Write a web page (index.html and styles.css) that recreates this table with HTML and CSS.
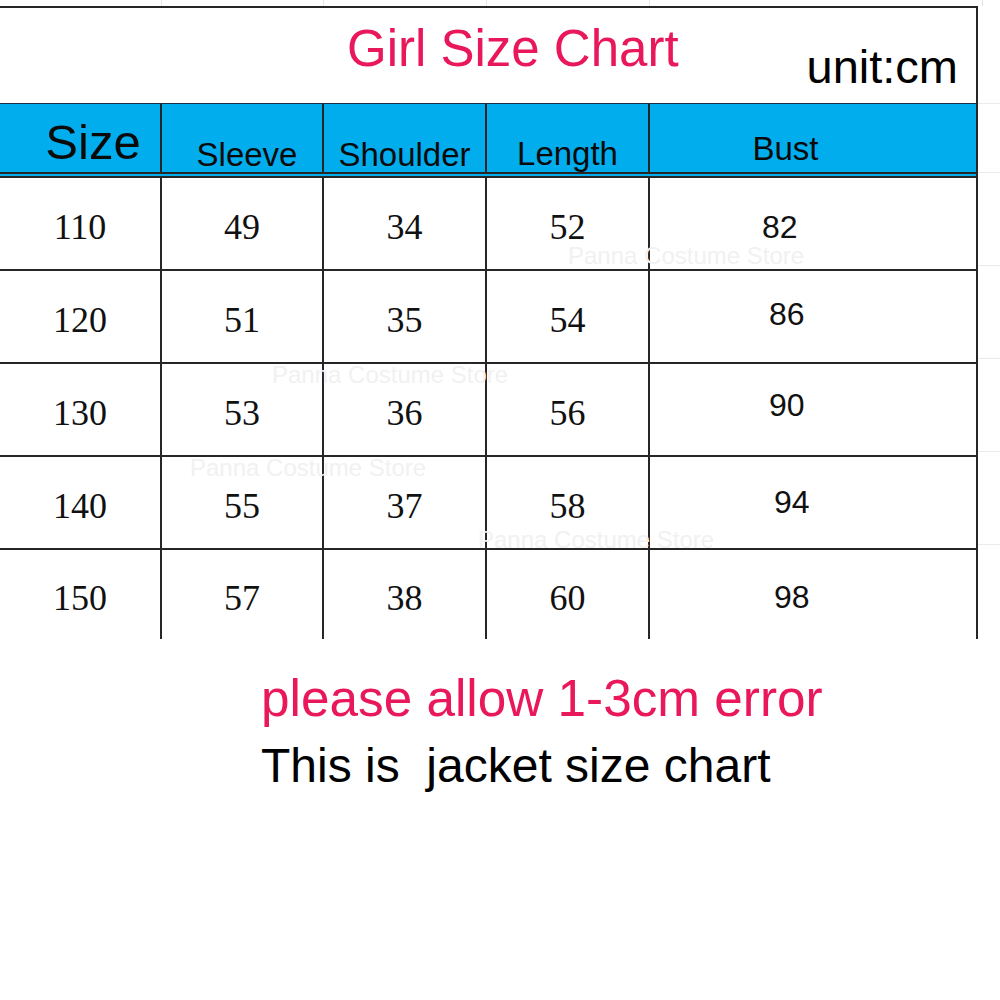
FILE: index.html
```html
<!DOCTYPE html>
<html lang="en">
<head>
<meta charset="utf-8">
<title>Girl Size Chart</title>
<link rel="stylesheet" href="styles.css">
</head>
<body>
<div class="page">
  <div class="topstrip">
    <span class="ts c1"></span><span class="ts c2"></span><span class="ts c3"></span><span class="ts c4"></span><span class="ts c5"></span>
  </div>
  <div class="sheet">
    <div class="chart">
      <div class="titlebar">
        <h1 class="title">Girl Size Chart</h1>
        <span class="unit">unit:cm</span>
      </div>
      <div class="row head">
        <div class="cell h-size">Size</div>
        <div class="cell h-sleeve">Sleeve</div>
        <div class="cell h-shoulder">Shoulder</div>
        <div class="cell h-length">Length</div>
        <div class="cell h-bust">Bust</div>
      </div>
      <div class="row data">
        <div class="cell num">110</div><div class="cell num">49</div><div class="cell num">34</div><div class="cell num">52</div><div class="cell bust b1">82</div>
      </div>
      <div class="row data">
        <div class="cell num">120</div><div class="cell num">51</div><div class="cell num">35</div><div class="cell num">54</div><div class="cell bust b2">86</div>
      </div>
      <div class="row data">
        <div class="cell num">130</div><div class="cell num">53</div><div class="cell num">36</div><div class="cell num">56</div><div class="cell bust b3">90</div>
      </div>
      <div class="row data">
        <div class="cell num">140</div><div class="cell num">55</div><div class="cell num">37</div><div class="cell num">58</div><div class="cell bust b4">94</div>
      </div>
      <div class="row data last">
        <div class="cell num">150</div><div class="cell num">57</div><div class="cell num">38</div><div class="cell num">60</div><div class="cell bust b5">98</div>
      </div>
    </div>
    <div class="gutter">
      <div class="g g-title"></div>
      <div class="g g-head"></div>
      <div class="g g-row"></div>
      <div class="g g-row"></div>
      <div class="g g-row"></div>
      <div class="g g-row"></div>
    </div>
    <div class="mark m1">Panna Costume Store</div>
    <div class="mark m2">Panna Costume Store</div>
    <div class="mark m3">Panna Costume Store</div>
    <div class="mark m4">Panna Costume Store</div>
  </div>
  <div class="notes">
    <p class="warn">please allow 1-3cm error</p>
    <p class="info">This is&nbsp; jacket size chart</p>
  </div>
</div>
</body>
</html>
```

FILE: styles.css
```css
html, body {
  margin: 0;
  padding: 0;
  background: #ffffff;
}

.page {
  width: 1000px;
  height: 1000px;
  overflow: hidden;
  font-family: "Liberation Sans", Arial, sans-serif;
  color: #000;
}

/* faint spreadsheet gridlines above the chart */
.topstrip {
  height: 6px;
  display: grid;
  grid-template-columns: 162px 162px 163px 163px 333px;
}
.ts {
  border-right: 1px solid #e6e6e6;
}

.sheet {
  position: relative;
  display: flex;
}

.chart {
  width: 978px;
  flex: none;
  box-sizing: border-box;
  border-top: 2px solid #262626;
  border-right: 2px solid #262626;
  display: flex;
  flex-direction: column;
}

.titlebar {
  height: 95px;
  display: flex;
  align-items: flex-start;
}
.title {
  margin: 0 0 0 347px;
  padding-top: 15px;
  font-size: 51px;
  line-height: 1;
  font-weight: normal;
  color: #e8185b;
}
.unit {
  margin-left: auto;
  margin-right: 18px;
  padding-top: 35px;
  font-size: 47px;
  line-height: 1;
}

.row {
  display: grid;
  grid-template-columns: 162px 162px 163px 163px 326px;
  box-sizing: border-box;
}
.cell {
  box-sizing: border-box;
  border-right: 2px solid #262626;
}
.cell:last-child {
  border-right: none;
}

.head {
  height: 75px;
  border-top: 1px solid #1f2c45;
  border-bottom: 6px double #262626;
  background: #02adee;
}
.head .cell {
  line-height: 1;
  text-align: center;
  font-size: 33px;
  color: #0a0a0a;
}
.h-size {
  font-size: 49px !important;
  padding: 14px 0 0 26px;
}
.h-sleeve { padding: 34px 0 0 10px; }
.h-shoulder { padding-top: 34px; }
.h-length { padding-top: 33px; }
.h-bust { padding: 28px 55px 0 0; }

.data {
  height: 93px;
  border-bottom: 2px solid #262626;
}
.data.last {
  height: 89px;
  border-bottom: none;
}
.num {
  display: flex;
  align-items: center;
  justify-content: center;
  padding-top: 7px;
  font-family: "Liberation Serif", "Times New Roman", serif;
  font-size: 36px;
  line-height: 1;
  color: #111;
}
.bust {
  display: flex;
  align-items: center;
  font-size: 32px;
  line-height: 1;
  color: #111;
}
.b1 { padding: 7px 0 0 112px; }
.b2 { padding: 0 0 6px 119px; }
.b3 { padding: 0 0 10px 119px; }
.b4 { padding: 0 0 2px 124px; }
.b5 { padding: 5px 0 0 124px; }

/* faint gridlines to the right of the chart */
.gutter {
  flex: 1;
  display: flex;
  flex-direction: column;
}
.g { border-bottom: 1px solid #ebebeb; box-sizing: border-box; }
.g-title { height: 98px; }
.g-head { height: 69px; }
.g-row { height: 93px; }

/* watermark overlay */
.mark {
  position: absolute;
  font-size: 24px;
  line-height: 18px;
  color: #f1f1f1;
  white-space: nowrap;
  pointer-events: none;
}
.m1 { left: 568px; top: 241px; }
.m2 { left: 272px; top: 360px; }
.m3 { left: 190px; top: 453px; }
.m4 { left: 478px; top: 525px; }

.notes {
  padding: 34px 0 0 261px;
}
.notes p {
  margin: 0;
  line-height: 1;
  white-space: nowrap;
}
.warn {
  font-size: 51.3px;
  color: #e8185b;
}
.info {
  margin-top: 18px !important;
  font-size: 48px;
}
```
